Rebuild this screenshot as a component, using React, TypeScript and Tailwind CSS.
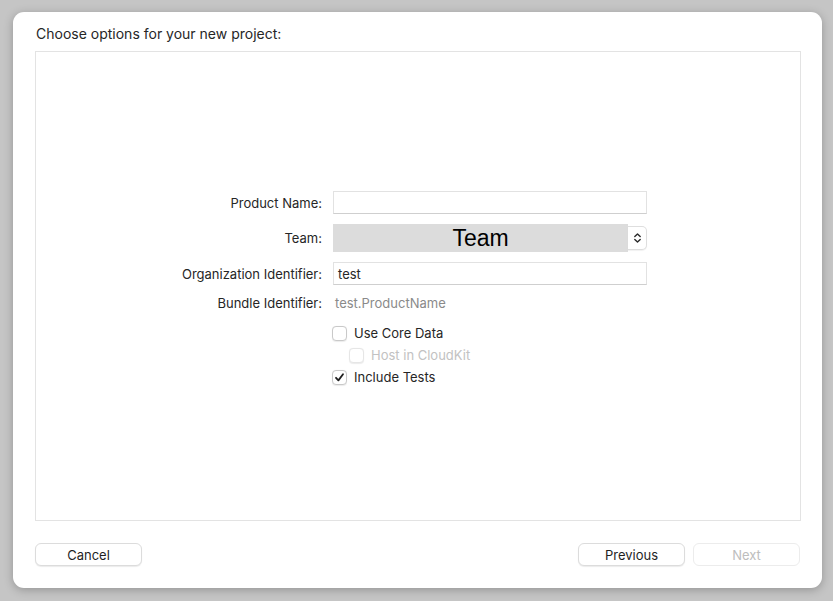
import React from 'react';

const Checkbox = ({ checked = false, disabled = false }: { checked?: boolean; disabled?: boolean }) => (
  <span
    className={`flex h-[15px] w-[15px] items-center justify-center rounded-[4px] border bg-white shadow-[0_0.5px_1px_rgba(0,0,0,0.08)] ${
      disabled ? 'border-[#e6e6e6]' : 'border-[#c9c9c9]'
    }`}
  >
    {checked && (
      <svg width="11" height="11" viewBox="0 0 11 11" fill="none">
        <path d="M2 5.8 L4.4 8.4 L9 2.2" stroke="#1f1f1f" strokeWidth="1.8" strokeLinecap="round" strokeLinejoin="round" />
      </svg>
    )}
  </span>
);

const Button = ({ label, disabled = false }: { label: string; disabled?: boolean }) => (
  <button
    className={`h-[23px] w-[107px] rounded-[6px] border bg-white pt-[2px] text-[13px] leading-none ${
      disabled
        ? 'border-[#ececec] text-[#bdbdbd]'
        : 'border-[#dcdcdc] text-[#1f1f1f] shadow-[0_1px_1px_rgba(0,0,0,0.08)]'
    }`}
  >
    {label}
  </button>
);

export default function App() {
  return (
    <div
      className="h-[601px] w-[833px] bg-[#c5c5c5] pl-[13px] pt-[12px]"
      style={{ fontFamily: 'Inter, "Liberation Sans", Arial, sans-serif' }}
    >
      <div className="flex h-[576px] w-[809px] flex-col rounded-[11px] bg-white px-[22px] shadow-[0_2px_10px_rgba(0,0,0,0.25)]">
        <div className="flex h-[39px] items-center pl-[1px] pt-[4px] text-[14px] text-[#262626]">
          Choose options for your new project:
        </div>
        <div className="flex h-[470px] w-[766px] flex-col border border-[#e3e3e3] pt-[139px]">
          <div className="grid grid-cols-[286px_314px] gap-x-[11px] text-[13px] text-[#262626]">
            <div className="flex h-[23px] items-center justify-end pt-[2px]">Product Name:</div>
            <div className="h-[23px] border border-[#e2e2e2] border-b-[#cfcfcf] bg-white" />

            <div className="mt-[10px] flex h-[28px] items-center justify-end pt-[2px]">Team:</div>
            <div className="mt-[10px] flex h-[28px]">
              <div
                className="flex h-[28px] w-[295px] items-center justify-center bg-[#dcdcdc] text-[23px] text-black"
                style={{ fontFamily: '"Liberation Sans", Arial, sans-serif' }}
              >
                Team
              </div>
              <div className="mt-[2px] flex h-[24px] w-[19px] items-center justify-center rounded-r-[5px] border border-l-0 border-[#dedede] bg-white shadow-[0_1px_1px_rgba(0,0,0,0.06)]">
                <svg width="9" height="12" viewBox="0 0 9 12" fill="none">
                  <path d="M1.8 4.6 L4.5 2 L7.2 4.6 M1.8 7.4 L4.5 10 L7.2 7.4" stroke="#2a2a2a" strokeWidth="1.4" strokeLinecap="round" strokeLinejoin="round" />
                </svg>
              </div>
            </div>

            <div className="mt-[10px] flex h-[23px] items-center justify-end pt-[2px]">Organization Identifier:</div>
            <div className="mt-[10px] flex h-[23px] items-center border border-[#e2e2e2] border-b-[#cfcfcf] bg-white px-[4px] pt-[2px]">
              test
            </div>

            <div className="mt-[7px] flex h-[22px] items-center justify-end pt-[2px]">Bundle Identifier:</div>
            <div className="mt-[7px] flex h-[22px] items-center pl-[2px] pt-[2px] text-[#8a8a8a]">test.ProductName</div>
          </div>

          <div className="ml-[296px] mt-[8px] flex flex-col text-[13px] text-[#262626]">
            <div className="flex h-[22px] items-center gap-[7px]">
              <Checkbox />
              <span className="pt-[1px]">Use Core Data</span>
            </div>
            <div className="ml-[17px] flex h-[22px] items-center gap-[7px] text-[#c2c2c2]">
              <Checkbox disabled />
              <span className="pt-[1px]">Host in CloudKit</span>
            </div>
            <div className="flex h-[23px] items-center gap-[7px]">
              <Checkbox checked />
              <span className="pt-[1px]">Include Tests</span>
            </div>
          </div>
        </div>
        <div className="mt-[22px] flex items-center justify-between">
          <Button label="Cancel" />
          <div className="flex gap-[8px]">
            <Button label="Previous" />
            <Button label="Next" disabled />
          </div>
        </div>
      </div>
    </div>
  );
}
